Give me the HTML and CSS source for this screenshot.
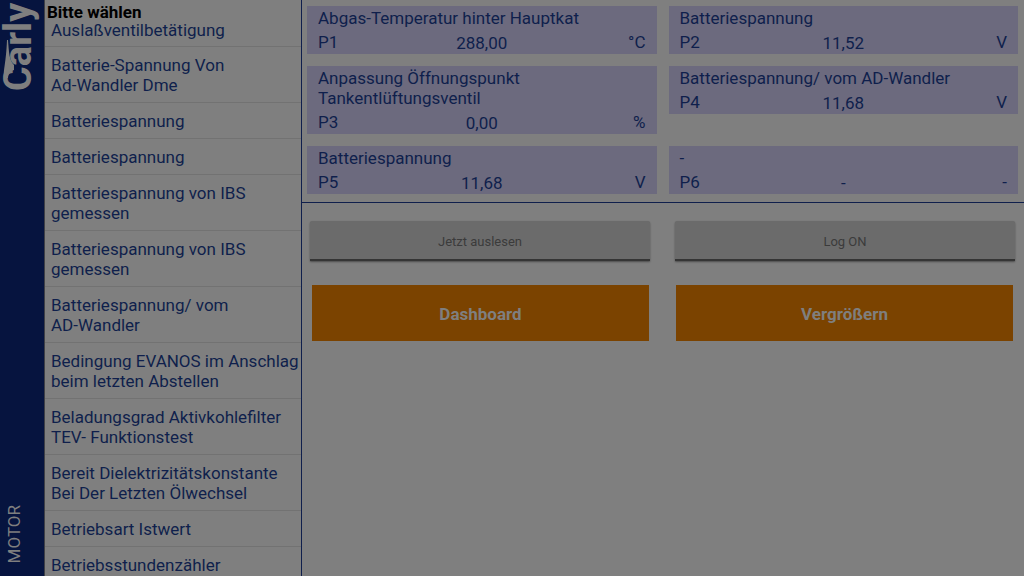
FILE: index.html
```html
<!DOCTYPE html>
<html lang="de">
<head>
    <meta charset="UTF-8">
    <meta name="viewport" content="width=device-width, initial-scale=1.0">
    <title>Carly - Motor</title>
    <link rel="stylesheet" href="styles.css">
</head>
<body>
    <aside class="sidebar">
        <svg class="logo" width="44" height="96" viewBox="0 0 44 96" role="img" aria-label="Carly">
            <g transform="translate(31 90) rotate(-90)">
                <text class="logo-text" x="-1" y="0">Carly</text>
                <path class="logo-swoosh" d="M12 -27 C20 -28 26 -25 50 -24 L50 -23 C38 -22 30 -22 25 -17 L20 -17 C19 -21 16 -23 12 -23 Z"/>
            </g>
        </svg>
        <div class="section">MOTOR</div>
    </aside>

    <nav class="picker">
        <h1>Bitte wählen</h1>
        <ul>
            <li>Auslaßventilbetätigung</li>
            <li>Batterie-Spannung Von<br>Ad-Wandler Dme</li>
            <li>Batteriespannung</li>
            <li>Batteriespannung</li>
            <li>Batteriespannung von IBS<br>gemessen</li>
            <li>Batteriespannung von IBS<br>gemessen</li>
            <li>Batteriespannung/ vom<br>AD-Wandler</li>
            <li>Bedingung EVANOS im Anschlag<br>beim letzten Abstellen</li>
            <li>Beladungsgrad Aktivkohlefilter<br>TEV- Funktionstest</li>
            <li>Bereit Dielektrizitätskonstante<br>Bei Der Letzten Ölwechsel</li>
            <li>Betriebsart Istwert</li>
            <li>Betriebsstundenzähler</li>
        </ul>
    </nav>

    <main>
        <section class="values">
            <div class="card">
                <div class="name">Abgas-Temperatur hinter Hauptkat</div>
                <div class="reading"><span>P1</span><span class="value">288,00</span><span class="unit">°C</span></div>
            </div>
            <div class="card">
                <div class="name">Batteriespannung</div>
                <div class="reading"><span>P2</span><span class="value">11,52</span><span class="unit">V</span></div>
            </div>
            <div class="card">
                <div class="name">Anpassung Öffnungspunkt<br>Tankentlüftungsventil</div>
                <div class="reading"><span>P3</span><span class="value">0,00</span><span class="unit">%</span></div>
            </div>
            <div class="card">
                <div class="name">Batteriespannung/ vom AD-Wandler</div>
                <div class="reading"><span>P4</span><span class="value">11,68</span><span class="unit">V</span></div>
            </div>
            <div class="card">
                <div class="name">Batteriespannung</div>
                <div class="reading"><span>P5</span><span class="value">11,68</span><span class="unit">V</span></div>
            </div>
            <div class="card">
                <div class="name">-</div>
                <div class="reading"><span>P6</span><span class="value">-</span><span class="unit">-</span></div>
            </div>
        </section>

        <div class="actions">
            <button type="button" class="btn-grey">Jetzt auslesen</button>
            <button type="button" class="btn-grey">Log ON</button>
        </div>
        <div class="actions actions-main">
            <button type="button" class="btn-orange">Dashboard</button>
            <button type="button" class="btn-orange">Vergrößern</button>
        </div>
    </main>
</body>
</html>
```
FILE: styles.css
```css
* {
    box-sizing: border-box;
}

body {
    margin: 0;
    height: 100vh;
    display: flex;
    overflow: hidden;
    background-color: #7f7f7f;
    color: #0f1f4c;
    font-family: Roboto, sans-serif;
    font-size: 17px;
    line-height: 20px;
}

/* blue bar on the left */
.sidebar {
    width: 45px;
    flex-shrink: 0;
    display: flex;
    flex-direction: column;
    justify-content: space-between;
    background-color: #06143f;
    border-right: 1px solid #3f4046;
    color: #7f7f7f;
}

.logo {
    display: block;
    overflow: visible;
}

.logo-text {
    fill: #7f7f7f;
    font-family: Roboto, sans-serif;
    font-size: 38px;
    font-weight: bold;
}

.logo-swoosh {
    fill: #7f7f7f;
}

.section {
    writing-mode: vertical-rl;
    transform: rotate(180deg);
    width: 28px;
    line-height: 28px;
    padding-top: 13px;
}

/* parameter list */
.picker {
    width: 257px;
    flex-shrink: 0;
    overflow: hidden;
    border-right: 1px solid #0f1f4c;
}

.picker h1 {
    margin: 0;
    padding: 4px 0 0 2px;
    font-size: 17px;
    line-height: 16px;
    color: #000;
}

.picker ul {
    list-style: none;
    margin: 0;
    padding: 0;
}

.picker li {
    padding: 8px 0 7px 6px;
    border-bottom: 1px solid #727272;
    white-space: nowrap;
}

.picker li:first-child {
    padding: 0 0 6px 6px;
}

main {
    flex: 1;
}

.values {
    display: grid;
    grid-template-columns: 1fr 1fr;
    gap: 12px;
    align-items: start;
    padding: 6px 6px 8px 5px;
    border-bottom: 1px solid #0f1f4c;
}

.card {
    padding: 2px 11px 0;
    background-color: #6c6a7e;
}

.reading {
    display: grid;
    grid-template-columns: 1fr 1fr 1fr;
    padding: 4px 0 1px;
}

.value {
    text-align: center;
    padding-top: 1px;
}

.unit {
    text-align: right;
}

.actions {
    display: grid;
    grid-template-columns: 1fr 1fr;
    gap: 25px;
    padding: 18px 9px 0 8px;
}

.actions-main {
    gap: 27px;
    padding: 24px 11px 0 10px;
}

button {
    font-family: inherit;
    border: none;
    cursor: pointer;
}

.btn-grey {
    height: 40px;
    padding-top: 4px;
    font-size: 13px;
    color: #3b3b3b;
    background-color: #6b6b6b;
    border-bottom: 2px solid #353535;
    border-radius: 2px 2px 0 0;
    box-shadow: 0 1px 2px rgba(0, 0, 0, 0.4);
}

.btn-orange {
    height: 56px;
    padding-top: 3px;
    font-size: 17px;
    font-weight: bold;
    color: #7f7f7f;
    background-color: #7b4300;
}
```
